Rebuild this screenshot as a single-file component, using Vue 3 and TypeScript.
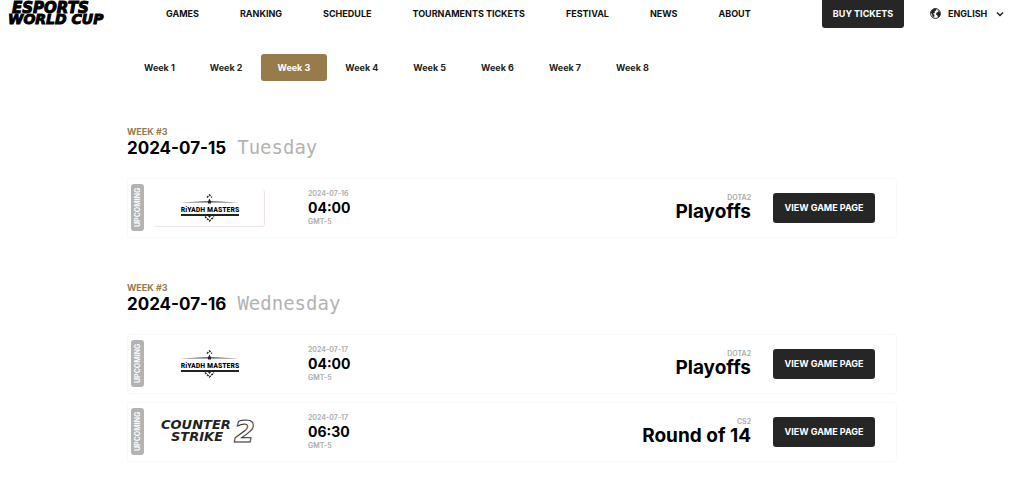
<script setup lang="ts">
import { ref } from 'vue'

interface Match {
  logo: 'riyadh' | 'cs2'
  tinted?: boolean
  date: string
  time: string
  zone: string
  game: string
  stage: string
}
interface Day {
  week: string
  date: string
  weekday: string
  matches: Match[]
}

const links = ['GAMES', 'RANKING', 'SCHEDULE', 'TOURNAMENTS TICKETS', 'FESTIVAL', 'NEWS', 'ABOUT']
const weeks = [1, 2, 3, 4, 5, 6, 7, 8]
const activeWeek = ref(3)
const language = ref('ENGLISH')

const days: Day[] = [
  {
    week: 'WEEK #3',
    date: '2024-07-15',
    weekday: 'Tuesday',
    matches: [
      { logo: 'riyadh', tinted: true, date: '2024-07-16', time: '04:00', zone: 'GMT-5', game: 'DOTA2', stage: 'Playoffs' },
    ],
  },
  {
    week: 'WEEK #3',
    date: '2024-07-16',
    weekday: 'Wednesday',
    matches: [
      { logo: 'riyadh', date: '2024-07-17', time: '04:00', zone: 'GMT-5', game: 'DOTA2', stage: 'Playoffs' },
      { logo: 'cs2', date: '2024-07-17', time: '06:30', zone: 'GMT-5', game: 'CS2', stage: 'Round of 14' },
    ],
  },
]
</script>

<template>
  <header class="header">
    <a href="#" class="brand" aria-label="Esports World Cup">
      <svg width="108" height="26" viewBox="0 0 108 26">
        <text x="5" y="13" class="brand-top">ESPORTS</text>
        <text x="1" y="24" class="brand-bottom">WORLD CUP</text>
      </svg>
    </a>
    <nav class="nav">
      <a v-for="link in links" :key="link" href="#">{{ link }}</a>
    </nav>
    <button type="button" class="dark buy">BUY TICKETS</button>
    <label class="language">
      <svg width="11" height="11" viewBox="0 0 22 22" aria-hidden="true">
        <circle cx="11" cy="11" r="9.8" fill="#fff" stroke="#222" stroke-width="2" />
        <path d="M3 6 7 2l6-1-1 4-3 2 1 3-4 1 3 3-1 5-3-3-1-4-3-3zM15 4l4 3 2 5-2 5-3 2-1-4-3-2 1-4 4-1z" fill="#222" />
      </svg>
      <select v-model="language" aria-label="Language">
        <option>ENGLISH</option>
      </select>
      <svg width="8" height="6" viewBox="0 0 8 6" aria-hidden="true">
        <path d="M1 1.500l3 3 3-3" fill="none" stroke="#222" stroke-width="1.500" />
      </svg>
    </label>
  </header>

  <main class="content">
    <div class="tabs">
      <button
        v-for="week in weeks"
        :key="week"
        type="button"
        :class="{ active: week === activeWeek }"
        @click="activeWeek = week"
      >
        Week {{ week }}
      </button>
    </div>

    <section v-for="day in days" :key="day.date" class="day">
      <p class="week">{{ day.week }}</p>
      <h2>
        {{ day.date }}<span class="weekday">{{ day.weekday }}</span>
      </h2>
      <div class="matches">
        <article v-for="match in day.matches" :key="match.time + match.game" class="match">
          <span class="status">UPCOMING</span>
          <div class="logo" :class="{ tinted: match.tinted }">
            <svg v-if="match.logo === 'riyadh'" width="60" height="28" viewBox="0 0 60 28" role="img" aria-label="Riyadh Masters">
              <path d="M0 8.500 29.500 7 59 8.500z" fill="#555" />
              <path d="M1 20h58v2H1z" fill="#222" />
              <path d="M29.500 4.500l1.500 3v2h-3v-2z" fill="#222" />
              <path d="M27 3.500l2.500-2.500 2.500 2.500M25 22.500l4.500 4.500 4.500-4.500" fill="none" stroke="#222" stroke-width="1.500" stroke-dasharray="2 1" />
              <path d="M28 22h3l-1.500 2z" fill="#222" />
              <text x="30" y="18" text-anchor="middle" class="riyadh">RiYADH MASTERS</text>
            </svg>
            <svg v-else width="100" height="26" viewBox="0 0 100 26" role="img" aria-label="Counter Strike 2">
              <text x="1" y="10" class="strike">COUNTER</text>
              <text x="11" y="22" class="strike">STRIKE</text>
              <text x="74" y="23" class="two">2</text>
            </svg>
          </div>
          <div class="when">
            <span class="meta">{{ match.date }}</span>
            <strong class="time">{{ match.time }}</strong>
            <span class="meta">{{ match.zone }}</span>
          </div>
          <div class="what">
            <span class="meta">{{ match.game }}</span>
            <strong class="stage">{{ match.stage }}</strong>
          </div>
          <button type="button" class="dark view">VIEW GAME PAGE</button>
        </article>
      </div>
    </section>
  </main>
</template>

<style>
body {
  margin: 0;
  background: #fff;
}
</style>

<style scoped>
.header,
.content {
  font-family: Inter, 'Liberation Sans', sans-serif;
  color: #000;
}
button {
  font-family: inherit;
  border: 0;
  cursor: pointer;
}
svg {
  overflow: visible;
}
.header {
  display: flex;
  align-items: flex-start;
  padding: 0 20px 0 7px;
  height: 28px;
}
.brand,
.brand svg {
  display: block;
}
.brand-top,
.brand-bottom,
.strike,
.two {
  font-family: 'DejaVu Sans', sans-serif;
  font-weight: 700;
  font-style: italic;
}
.brand-top,
.brand-bottom {
  stroke: #000;
  stroke-width: 1px;
}
.brand-top {
  font-size: 15px;
}
.brand-bottom {
  font-size: 14px;
}
.nav {
  display: flex;
  gap: 41px;
  margin-left: 51px;
  white-space: nowrap;
}
.nav a {
  color: #111;
  text-decoration: none;
  font-size: 9px;
  font-weight: 700;
  line-height: 28px;
}
.dark {
  background: #262626;
  color: #fff;
  border-radius: 3px;
  font-size: 9px;
  font-weight: 700;
  padding: 0 0 1px;
  white-space: nowrap;
}
.buy {
  width: 82px;
  height: 28px;
  border-radius: 0 0 3px 3px;
  margin-left: auto;
}
.language {
  display: flex;
  align-items: center;
  height: 27px;
  margin-left: 26px;
}
.language select {
  appearance: none;
  border: 0;
  background: none;
  padding: 0;
  margin: 0 8px 0 7px;
  font-family: inherit;
  font-size: 9px;
  font-weight: 700;
  color: #111;
}
.content {
  max-width: 770px;
  margin: 0 auto;
  padding: 26px 0 22px;
}
.tabs {
  display: flex;
  gap: 1px;
  padding-bottom: 1px;
}
.tabs button {
  height: 27px;
  padding: 0 17px;
  background: none;
  border-radius: 3px;
  font-size: 9px;
  font-weight: 700;
  color: #222;
}
.tabs .active {
  background: #977b4a;
  color: #fff;
}
.day {
  margin-top: 44px;
}
.week {
  margin: 0;
  font-size: 9px;
  font-weight: 700;
  line-height: 12px;
  color: #977b4a;
}
h2 {
  display: flex;
  align-items: center;
  gap: 11px;
  margin: 0 0 20px;
  font-size: 17px;
  font-weight: 700;
  line-height: 20px;
}
.weekday {
  font-family: 'DejaVu Sans Mono', monospace;
  font-size: 19px;
  font-weight: 400;
  line-height: 18px;
  padding-bottom: 2px;
  color: #b3b3b3;
}
.matches {
  display: grid;
  gap: 8px;
}
.match {
  display: flex;
  align-items: center;
  box-sizing: border-box;
  height: 60px;
  padding: 0 21px 1px 3px;
  border: 1px solid #f9f9f9;
  border-radius: 3px;
}
.status {
  width: 13px;
  height: 47px;
  border-radius: 3px;
  background: #b3b3b3;
  color: #fff;
  font-size: 7px;
  font-weight: 700;
  line-height: 13px;
  text-align: center;
  writing-mode: vertical-rl;
  transform: rotate(180deg);
}
.logo {
  display: flex;
  align-items: center;
  justify-content: center;
  box-sizing: border-box;
  width: 111px;
  height: 38px;
  margin-left: 10px;
  border: 1px solid transparent;
  border-radius: 4px;
}
.tinted {
  border-right-color: #f9dfe3;
  border-bottom-color: #efe3e5;
}
.riyadh {
  font-family: 'Liberation Sans Narrow', 'Roboto Condensed', Roboto, sans-serif;
  font-size: 8px;
  font-weight: 700;
}
.strike {
  font-size: 13px;
  fill: #222;
}
.two {
  font-size: 30px;
  fill: #fff;
  stroke: #333;
  stroke-width: 1px;
}
.when,
.what {
  display: flex;
  flex-direction: column;
}
.when {
  margin-left: 43px;
}
.what {
  align-items: flex-end;
  margin-left: auto;
  margin-right: 22px;
}
.meta {
  font-size: 7px;
  font-weight: 600;
  line-height: 9px;
  color: #aaa;
}
.time {
  font-size: 14px;
  line-height: 19px;
}
.stage {
  font-size: 19px;
  line-height: 19px;
  padding-bottom: 2px;
}
.view {
  width: 102px;
  height: 30px;
}
</style>
